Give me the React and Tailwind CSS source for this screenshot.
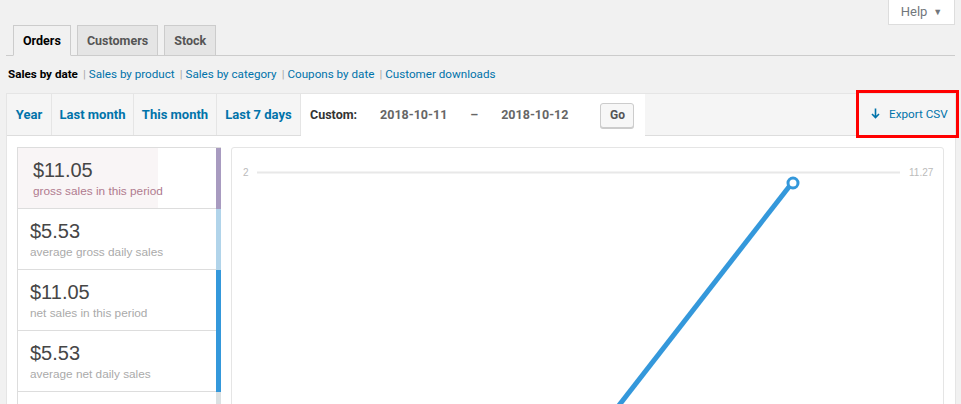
import React from "react";

const legend = [
  { v: "$11.05", l: "gross sales in this period", c: "bg-[#a89bc0]", hl: true },
  { v: "$5.53", l: "average gross daily sales", c: "bg-[#b1d4ea]" },
  { v: "$11.05", l: "net sales in this period", c: "bg-[#3498db]" },
  { v: "$5.53", l: "average net daily sales", c: "bg-[#3498db]" },
  { v: "1", l: "orders placed", c: "bg-[#dbe1e3]" },
];

export default function App() {
  return (
    <div className="w-[961px] h-[404px] overflow-hidden bg-[#f1f1f1] font-['Roboto',sans-serif] text-[13px] text-[#444]">
      {/* Help */}
      <div className="flex justify-end pr-[6px]">
        <div className="h-[25px] w-[67px] bg-white border border-t-0 border-[#ddd] flex items-center justify-center gap-[6px] text-[#72777c] text-[13px]">
          <span>Help</span>
          <span className="text-[9px] leading-none">▼</span>
        </div>
      </div>

      {/* Tabs */}
      <div className="ml-[6px] mr-[6px] h-[31px] border-b border-[#ccc] flex items-end pl-[7px] gap-[6px]">
        <div className="h-[31px] -mb-px px-[9px] pt-[2px] border border-[#ccc] border-b-[#f1f1f1] bg-[#f1f1f1] font-bold text-[12.5px] text-black flex items-center">Orders</div>
        <div className="h-[30px] px-[9px] pt-[1px] border border-[#ccc] border-b-0 bg-[#e5e5e5] font-bold text-[12.5px] text-[#555] flex items-center">Customers</div>
        <div className="h-[30px] px-[9px] pt-[1px] border border-[#ccc] border-b-0 bg-[#e5e5e5] font-bold text-[12.5px] text-[#555] flex items-center">Stock</div>
      </div>

      {/* Subnav */}
      <div className="h-[37px] pl-[8px] flex items-center text-[11.65px]">
        <span className="font-bold text-black">Sales by date</span>
        <span className="text-[#aaa] ml-[5px] mr-[3px]">|</span>
        <span className="text-[#0073aa]">Sales by product</span>
        <span className="text-[#aaa] ml-[5px] mr-[3px]">|</span>
        <span className="text-[#0073aa]">Sales by category</span>
        <span className="text-[#aaa] ml-[5px] mr-[3px]">|</span>
        <span className="text-[#0073aa]">Coupons by date</span>
        <span className="text-[#aaa] ml-[5px] mr-[3px]">|</span>
        <span className="text-[#0073aa]">Customer downloads</span>
      </div>

      {/* Postbox */}
      <div className="ml-[6px] w-[950px] border border-[#e5e5e5] bg-white">
        <div className="h-[42px] bg-[#f5f5f5] border-b border-[#ddd] flex items-stretch">
          <div className="w-[45px] border-r border-[#e5e5e5] flex items-center justify-center font-bold text-[#0073aa]">Year</div>
          <div className="w-[82px] border-r border-[#e5e5e5] flex items-center justify-center font-bold text-[#0073aa]">Last month</div>
          <div className="w-[83px] border-r border-[#e5e5e5] flex items-center justify-center font-bold text-[#0073aa]">This month</div>
          <div className="w-[84px] border-r border-[#e5e5e5] flex items-center justify-center font-bold text-[#0073aa]">Last 7 days</div>
          <div className="w-[344px] -mb-px bg-white flex items-center pl-[9px] text-[12.5px]">
            <span className="font-bold text-[#333]">Custom:</span>
            <span className="ml-[23px] font-bold text-[#666]">2018-10-11</span>
            <span className="ml-[23px] font-bold text-[#666]">–</span>
            <span className="ml-[23px] font-bold text-[#666]">2018-10-12</span>
            <div className="ml-[32px] h-[25px] w-[34px] border border-[#ccc] rounded-[3px] bg-[#f7f7f7] shadow-[0_1px_0_#ccc] flex items-center justify-center font-bold text-[12px] text-[#555]">Go</div>
          </div>
          <div className="flex-1" />
          <div className="relative w-[97px] flex items-center pl-[12px] text-[#0073aa] border-l border-[#e5e5e5]">
            <svg width="9" height="11" viewBox="0 0 9 11" className="mr-[9px] -mt-[3px]">
              <path d="M4.5 0.5V9.5M1 6L4.5 9.5L8 6" stroke="#0073aa" strokeWidth="1.6" fill="none" />
            </svg>
            <span className="text-[11.7px]">Export CSV</span>
            <div className="absolute left-[-3px] top-[-4px] w-[103px] h-[48px] border-[3px] border-[#ff0000]" />
          </div>
        </div>

        <div className="flex items-start pt-[11px] pl-[10px] h-[360px]">
          {/* Legend */}
          <div className="w-[204px] border-l border-t border-[#ddd] bg-white">
            {legend.map((it, i) => (
              <div key={i} className="h-[61px] flex relative">
                {it.hl && <div className="absolute left-0 top-0 bottom-0 w-[140px] bg-[#f9f5f6]" />}
                <div className={`relative flex-1 flex flex-col border-b border-[#ddd] ${it.hl ? "pl-[15px]" : "pl-[12px]"} pt-[10px] font-['Liberation_Sans',Arial,sans-serif]`}>
                  <span className="text-[20px] leading-[24px] text-[#464646]">{it.v}</span>
                  <span className={`text-[11.8px] leading-[14px] mt-[2px] ${it.hl ? "text-[#b07a8e]" : "text-[#aaa]"}`}>{it.l}</span>
                </div>
                <div className={`w-[5px] ${it.c}`} />
              </div>
            ))}
          </div>

          {/* Chart */}
          <div className="ml-[10px] w-[713px] h-[400px] border border-[#e5e5e5] rounded-[3px] bg-white">
            <svg width="711" height="400" viewBox="0 0 711 400">
              <line x1="25" y1="24.5" x2="668" y2="24.5" stroke="#e8e8e8" strokeWidth="2" />
              <text x="11" y="28" fontSize="10" fill="#bbb" fontFamily="Liberation Sans, Arial, sans-serif">2</text>
              <text x="677" y="28" fontSize="10" fill="#bbb" fontFamily="Liberation Sans, Arial, sans-serif">11.27</text>
              <line x1="560" y1="35" x2="360" y2="292" stroke="#3498db" strokeWidth="5" />
              <circle cx="561" cy="35" r="5" fill="white" stroke="#3498db" strokeWidth="3" />
            </svg>
          </div>
        </div>
      </div>
    </div>
  );
}
